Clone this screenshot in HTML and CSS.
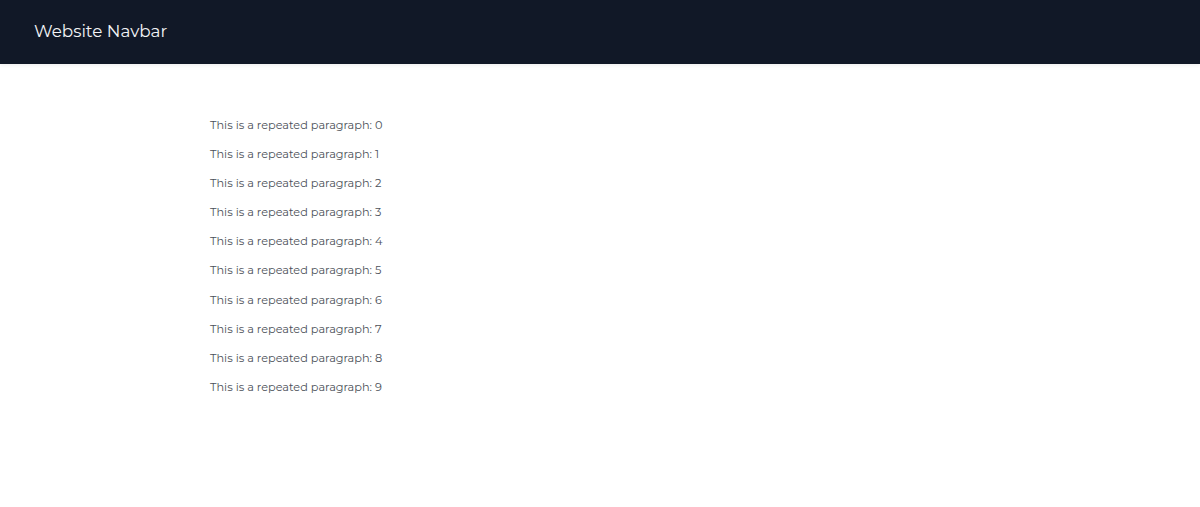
FILE: index.html
```html
<!DOCTYPE html>
<html lang="en">
<head>
    <meta charset="UTF-8">
    <meta name="viewport" content="width=device-width, initial-scale=1.0">
    <title>Website Navbar</title>
    <link rel="stylesheet" href="styles.css">
</head>
<body>
    <nav class="navbar">
        <span class="brand">Website Navbar</span>
    </nav>

    <main class="content">
        <p>This is a repeated paragraph: 0</p>
        <p>This is a repeated paragraph: 1</p>
        <p>This is a repeated paragraph: 2</p>
        <p>This is a repeated paragraph: 3</p>
        <p>This is a repeated paragraph: 4</p>
        <p>This is a repeated paragraph: 5</p>
        <p>This is a repeated paragraph: 6</p>
        <p>This is a repeated paragraph: 7</p>
        <p>This is a repeated paragraph: 8</p>
        <p>This is a repeated paragraph: 9</p>
    </main>
</body>
</html>
```

FILE: styles.css
```css
body {
    font-family: 'Montserrat', 'Inter', sans-serif;
    margin: 0;
    background-color: #fff;
    color: #4b5058;
}

.navbar {
    display: flex;
    align-items: center;
    height: 64px;
    padding: 0 34px;
    background-color: #111827;
    box-shadow: 0 1px 4px rgba(0, 0, 0, 0.08);
}

.brand {
    color: #f3f4f6;
    font-size: 16.8px;
    margin-top: -2px;
}

.content {
    display: flex;
    flex-direction: column;
    padding: 47px 210px;
}

.content p {
    margin: 0;
    font-size: 11.3px;
    line-height: 29.1px;
}
```
